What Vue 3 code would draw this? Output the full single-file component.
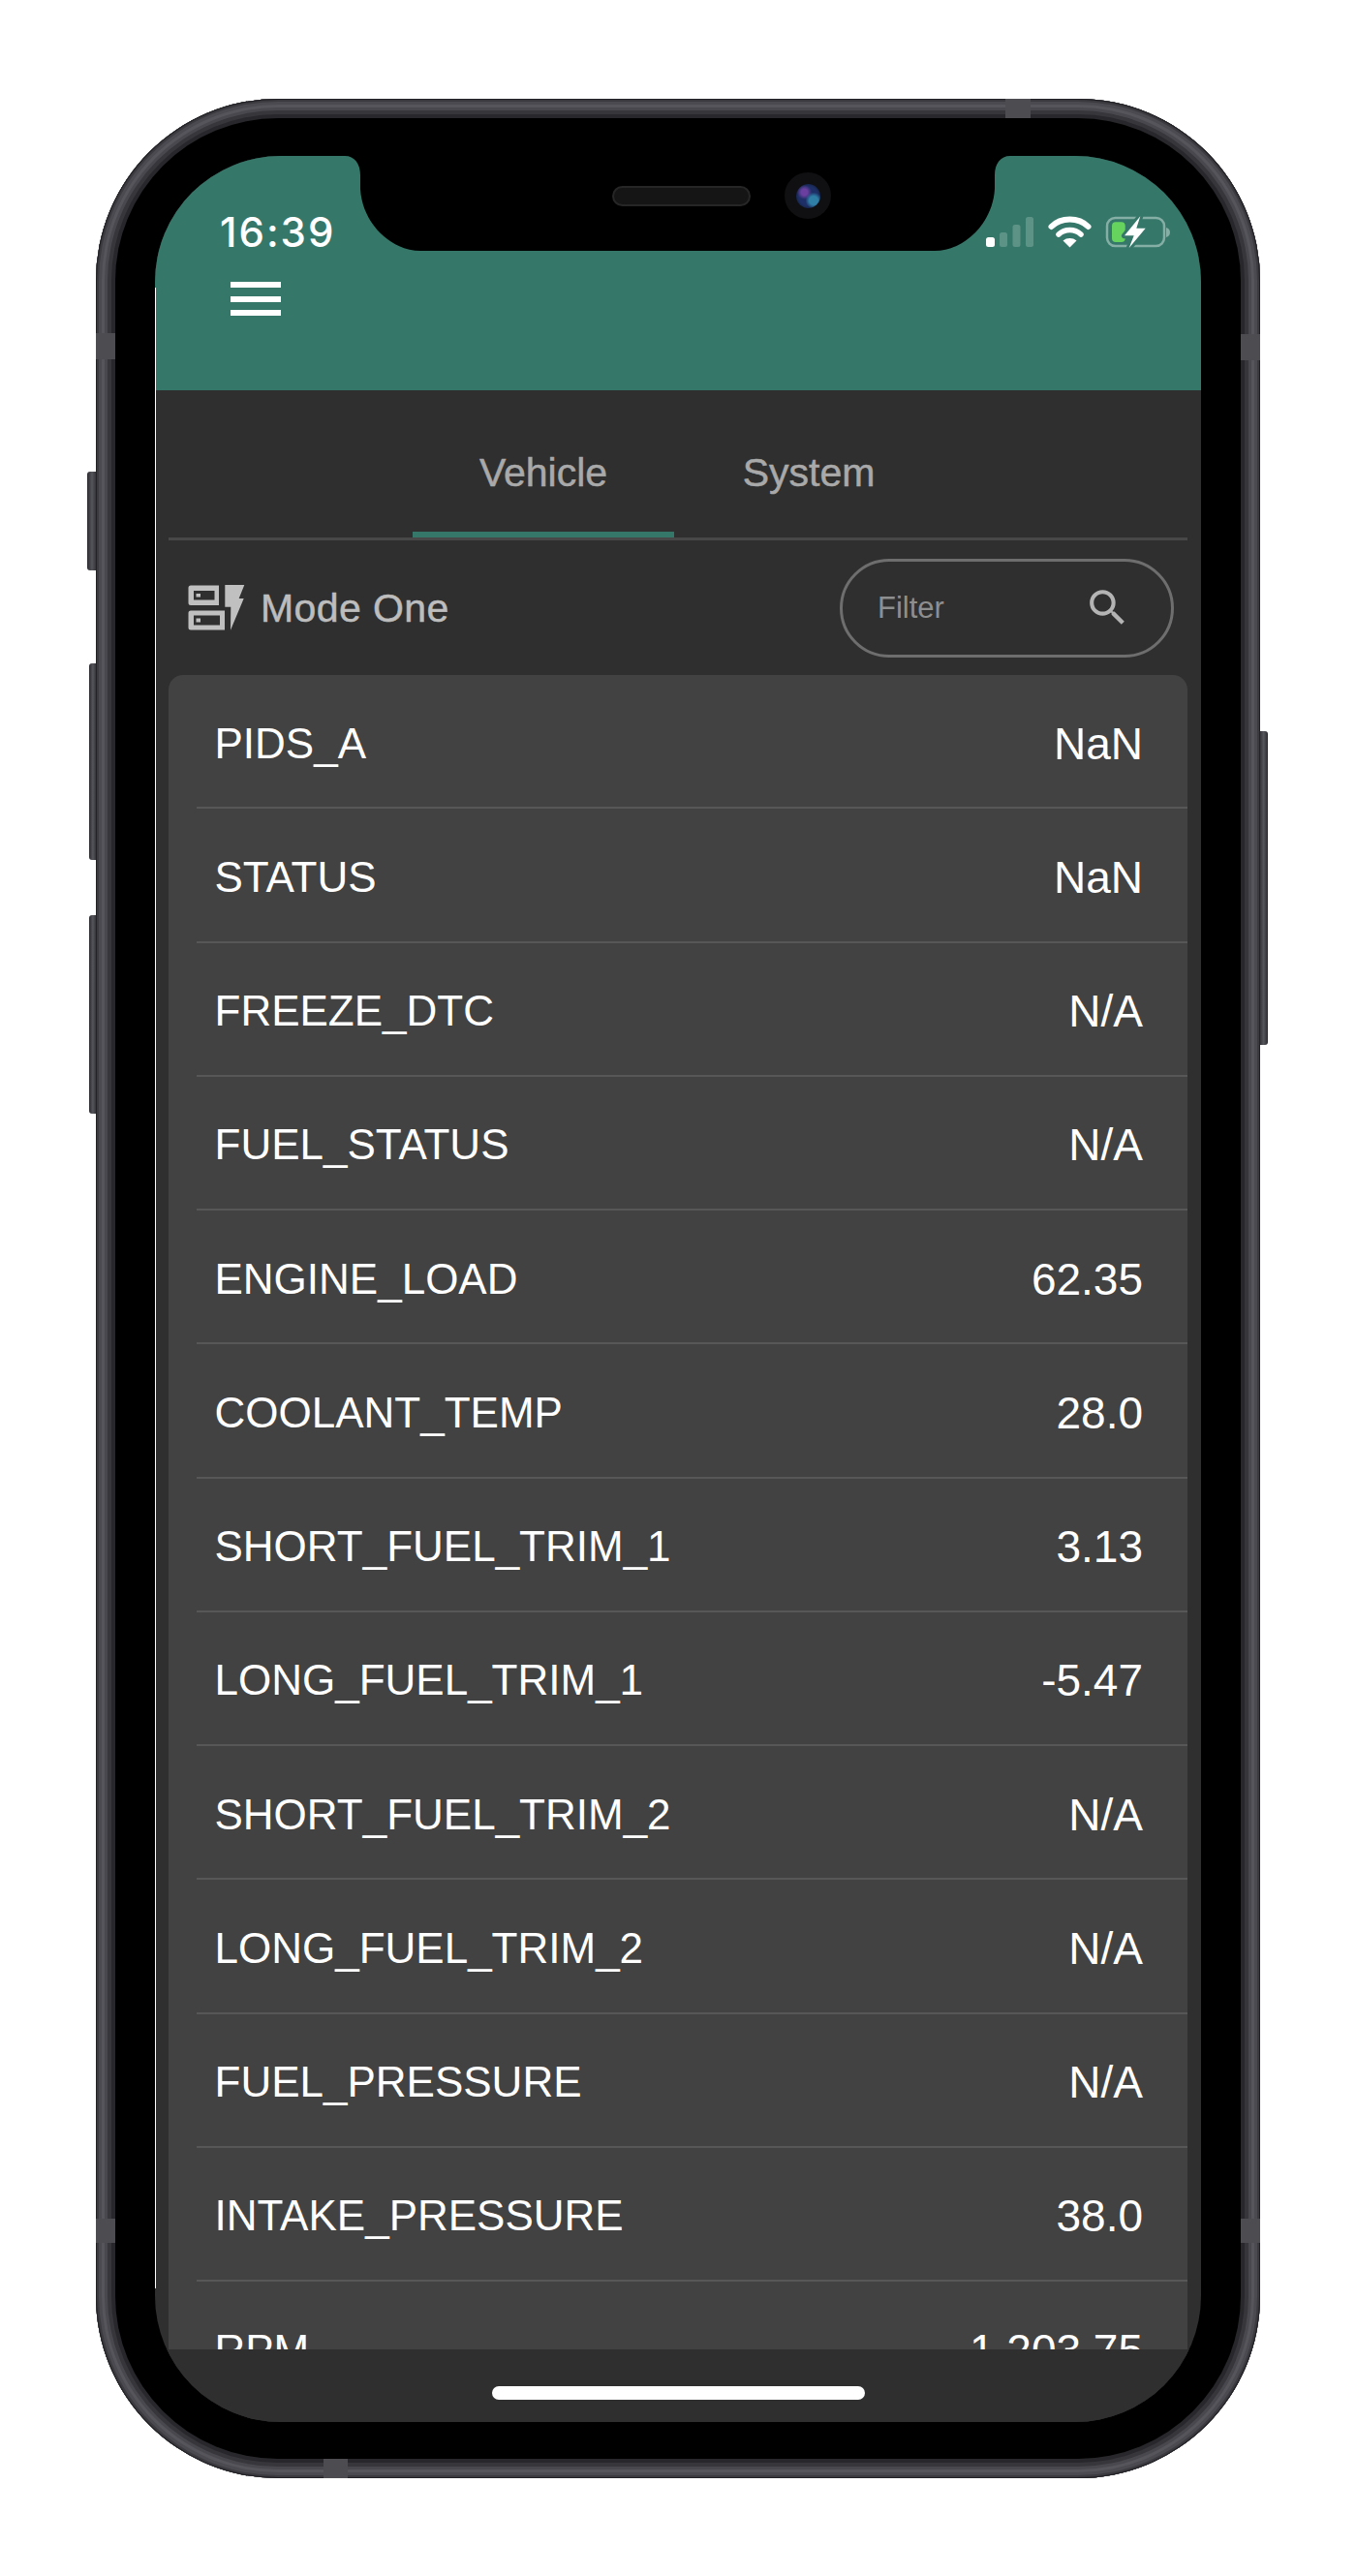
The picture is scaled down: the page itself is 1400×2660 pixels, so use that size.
<script setup>
const rows = [
  ['PIDS_A', 'NaN'],
  ['STATUS', 'NaN'],
  ['FREEZE_DTC', 'N/A'],
  ['FUEL_STATUS', 'N/A'],
  ['ENGINE_LOAD', '62.35'],
  ['COOLANT_TEMP', '28.0'],
  ['SHORT_FUEL_TRIM_1', '3.13'],
  ['LONG_FUEL_TRIM_1', '-5.47'],
  ['SHORT_FUEL_TRIM_2', 'N/A'],
  ['LONG_FUEL_TRIM_2', 'N/A'],
  ['FUEL_PRESSURE', 'N/A'],
  ['INTAKE_PRESSURE', '38.0'],
  ['RPM', '1,203.75'],
  ['SPEED', '0.0']
]
</script>

<template>
  <div class="page">
    <div class="device">
      <span class="btn mute"></span>
      <span class="btn vol-up"></span>
      <span class="btn vol-down"></span>
      <span class="btn power"></span>
      <div class="bezel">
        <span class="edge-line"></span>
        <div class="screen">
          <header class="header">
            <div class="status">
              <span class="time">16:39</span>
              <svg class="status-icons" width="190" height="33" viewBox="0 0 190 33">
                <rect x="0" y="22" width="9" height="10" rx="2.5" fill="#fff" />
                <rect x="14" y="17" width="8" height="15" rx="2.5" fill="#fff" fill-opacity=".2" />
                <rect x="27.5" y="9" width="8" height="23" rx="2.5" fill="#fff" fill-opacity=".2" />
                <rect x="41" y="1" width="8" height="31" rx="2.5" fill="#fff" fill-opacity=".2" />
                <path d="M67.500 11C72 6.500 78.500 3.500 86.500 3.500C94.500 3.500 101 6.500 105.500 11" fill="none" stroke="#fff" stroke-width="6" stroke-linecap="round" />
                <path d="M75 19C78 16.200 82 14.500 86.500 14.500C91 14.500 95 16.200 98 19" fill="none" stroke="#fff" stroke-width="5.500" stroke-linecap="round" />
                <path d="M79.500 25.500C81.500 23.800 84 23 86.500 23C89 23 91.500 23.800 93.500 25.500L86.500 32.500Z" fill="#fff" />
                <rect x="125" y="2" width="59" height="29" rx="8.500" fill="none" stroke="#fff" stroke-opacity=".4" stroke-width="2.500" />
                <path d="M186 12V22C188.500 21.500 190 19.500 190 17C190 14.500 188.500 12.500 186 12Z" fill="#fff" fill-opacity=".4" />
                <rect x="130" y="6.300" width="13.700" height="20.700" rx="4" fill="#66d35f" />
                <path d="M159.300 0.300L143 20.300H152.700L147.700 33L164.700 12.700H155.300Z" fill="#fff" stroke="#35786a" stroke-width="6" stroke-linejoin="round" paint-order="stroke" />
              </svg>
            </div>
            <div class="menu"><span></span><span></span><span></span></div>
          </header>

          <nav class="tabs">
            <div class="tab active">Vehicle</div>
            <div class="tab system">System</div>
          </nav>

          <div class="toolbar">
            <div class="mode">
              <svg class="mode-icon" width="59" height="47" viewBox="0 0 59 47">
                <path fill-rule="evenodd" fill="#c0c0c0" d="M3 0.500H32V21H3Q0.500 21 0.500 18.500V3Q0.500 0.500 3 0.500ZM6 6V15.500H27.500V6ZM8.500 9H13V12.500H8.500Z" />
                <path fill-rule="evenodd" fill="#c0c0c0" d="M3 26.500H38V46.500H3Q0.500 46.500 0.500 44V29Q0.500 26.500 3 26.500ZM6 31.500V41.500H33V31.500ZM8.500 34.500H13V38.500H8.500Z" />
                <path fill="#c0c0c0" d="M38.300 0H58.300L52.700 14H57.700L44 46.700L44.300 22.700H38.300Z" />
              </svg>
              <span class="mode-label">Mode One</span>
            </div>
            <div class="filter">
              <span class="filter-text">Filter</span>
              <svg class="search" width="49" height="49" viewBox="0 0 24 24">
                <path fill="#b4b4b4" d="M15.500 14h-.79l-.28-.27A6.471 6.471 0 0 0 16 9.500 6.500 6.500 0 1 0 9.500 16c1.610 0 3.090-.59 4.230-1.570l.27.28v.79l5 4.990L20.490 19l-4.990-5zm-6 0C7.010 14 5 11.990 5 9.500S7.010 5 9.500 5 14 7.010 14 9.500 11.990 14 9.500 14z" />
              </svg>
            </div>
          </div>

          <div class="list-clip">
            <div class="card">
              <div v-for="row in rows" :key="row[0]" class="row">
                <span>{{ row[0] }}</span>
                <span class="value">{{ row[1] }}</span>
              </div>
            </div>
          </div>

          <div class="home-bar"><span class="home"></span></div>

          <svg class="notch" width="687" height="98" viewBox="0 0 687 98">
            <path d="M0 0C10 0 16 8 16 20V34C18 70 48 98 78 98H609C639 98 669 70 671 34V20C671 8 677 0 687 0Z" fill="#000" />
          </svg>
          <span class="speaker"></span>
          <span class="camera"><span class="lens"></span></span>
        </div>
      </div>
      <span class="band band-top"></span>
      <span class="band band-bottom"></span>
      <span class="band band-l1"></span>
      <span class="band band-r1"></span>
      <span class="band band-l2"></span>
      <span class="band band-r2"></span>
    </div>
  </div>
</template>

<style>
html, body { background: #fff; }
</style>

<style scoped>
.page {
  width: 1400px;
  height: 2660px;
  padding: 102px 0 0 99px;
  box-sizing: border-box;
  background: #fff;
  overflow: hidden;
  font-family: "Liberation Sans", Arial, sans-serif;
}
.device {
  position: relative;
  width: 1202px;
  height: 2457px;
  box-sizing: border-box;
  padding: 20px;
  border-radius: 188px;
  background: #28282c;
  box-shadow:
    inset 0 0 0 1px #232327,
    inset 0 0 0 3px #3a3a3f,
    inset 0 0 0 6px #4a4a50,
    inset 0 0 0 9px #55555b,
    inset 0 0 0 12px #48484e,
    inset 0 0 0 16px #36363b;
}
.btn {
  position: absolute;
  background: linear-gradient(to right, #2b2b30, #55555c 55%, #35353a);
  border-radius: 3px 0 0 3px;
}
.mute { left: -9px; top: 385px; width: 9px; height: 102px; }
.vol-up { left: -7px; top: 583px; width: 7px; height: 203px; }
.vol-down { left: -7px; top: 843px; width: 7px; height: 205px; }
.power {
  left: 1202px; top: 653px; width: 8px; height: 324px;
  border-radius: 0 3px 3px 0;
  background: linear-gradient(to left, #2b2b30, #55555c 55%, #35353a);
}
.band { position: absolute; background: #4c4c51; }
.band-top { left: 939px; top: 0; width: 26px; height: 20px; }
.band-bottom { left: 235px; bottom: 0; width: 25px; height: 20px; }
.band-l1 { left: 0; top: 242px; width: 20px; height: 27px; }
.band-r1 { right: 0; top: 243px; width: 20px; height: 27px; }
.band-l2 { left: 0; top: 2189px; width: 20px; height: 25px; }
.band-r2 { right: 0; top: 2189px; width: 20px; height: 25px; }
.bezel {
  position: relative;
  height: 100%;
  box-sizing: border-box;
  padding: 39px 41px 38px 41px;
  border-radius: 168px;
  background: #000;
}
.edge-line {
  position: absolute;
  left: 41px;
  top: 175px;
  width: 1px;
  height: 2066px;
  background: #fff;
  z-index: 2;
}
.screen {
  position: relative;
  height: 100%;
  display: flex;
  flex-direction: column;
  border-radius: 130px;
  overflow: hidden;
  background: #2f2f2f;
}
.header {
  flex: none;
  height: 242px;
  background: #35786a;
}
.status {
  display: flex;
  justify-content: space-between;
  align-items: flex-start;
  padding: 62px 32px 0 67px;
  height: 34px;
}
.time {
  color: #fff;
  font-family: Inter, "Liberation Sans", sans-serif;
  font-size: 42px;
  font-weight: 500;
  letter-spacing: 2px;
  line-height: 34px;
}
.status-icons { display: block; overflow: visible; }
.menu {
  display: flex;
  flex-direction: column;
  gap: 8.500px;
  width: 52px;
  margin: 34px 0 0 78px;
}
.menu span { height: 6px; background: #fff; }
.tabs {
  flex: none;
  display: flex;
  justify-content: center;
  height: 152px;
  margin: 0 14px;
  border-bottom: 3px solid #484848;
}
.tab {
  box-sizing: border-box;
  width: 270px;
  padding-top: 62px;
  text-align: center;
  color: #a9a9a9;
  font-size: 41px;
  line-height: 46px;
  -webkit-text-stroke: .5px #a9a9a9;
}
.tab.system { width: 278px; }
.tab.active { border-bottom: 6px solid #35786a; height: 152px; }
.toolbar {
  flex: none;
  display: flex;
  align-items: center;
  justify-content: space-between;
  height: 139px;
  padding: 0 28px 0 34px;
}
.mode { display: flex; align-items: center; gap: 16px; }
.mode-icon { display: block; }
.mode-label {
  color: #bdbdbd;
  font-size: 41px;
  line-height: 46px;
  letter-spacing: .4px;
  -webkit-text-stroke: .5px #bdbdbd;
}
.filter {
  display: flex;
  align-items: center;
  justify-content: space-between;
  box-sizing: border-box;
  width: 345px;
  height: 102px;
  padding: 0 41px 0 36px;
  border: 3px solid #6e6e6e;
  border-radius: 51px;
}
.filter-text { color: #8e8e8e; font-size: 31px; line-height: 36px; }
.search { display: block; }
.list-clip {
  flex: 1;
  min-height: 0;
  overflow: hidden;
  padding: 0 14px;
}
.card {
  background: #424242;
  border-radius: 15px 15px 0 0;
  padding-left: 29px;
}
.row {
  display: flex;
  align-items: center;
  justify-content: space-between;
  box-sizing: border-box;
  height: 138.250px;
  padding: 5px 46px 0 18.500px;
  border-bottom: 2px solid #575757;
  color: #fff;
  font-size: 44px;
}
.value { font-size: 46px; }
.home-bar {
  flex: none;
  height: 75px;
  display: flex;
  justify-content: center;
  padding-top: 38px;
  box-sizing: border-box;
  background: #2f2f2f;
}
.home {
  width: 385px;
  height: 14px;
  border-radius: 7px;
  background: #fff;
}
.notch { position: absolute; left: 196px; top: 0; display: block; }
.speaker {
  position: absolute;
  left: 472px;
  top: 31px;
  width: 143px;
  height: 21px;
  box-sizing: border-box;
  border-radius: 11px;
  background: #151515;
  border: 2px solid #262626;
}
.camera {
  position: absolute;
  left: 650px;
  top: 17px;
  width: 48px;
  height: 48px;
  display: flex;
  align-items: center;
  justify-content: center;
  border-radius: 50%;
  background: #101012;
}
.lens {
  width: 25px;
  height: 25px;
  border-radius: 50%;
  background:
    radial-gradient(circle at 72% 68%, #2f7ea6 0 18%, transparent 34%),
    radial-gradient(circle at 34% 34%, #6b3fa0 0 14%, transparent 32%),
    radial-gradient(circle at 50% 50%, #1d2f66 0 55%, #0c1220 100%);
}
</style>
